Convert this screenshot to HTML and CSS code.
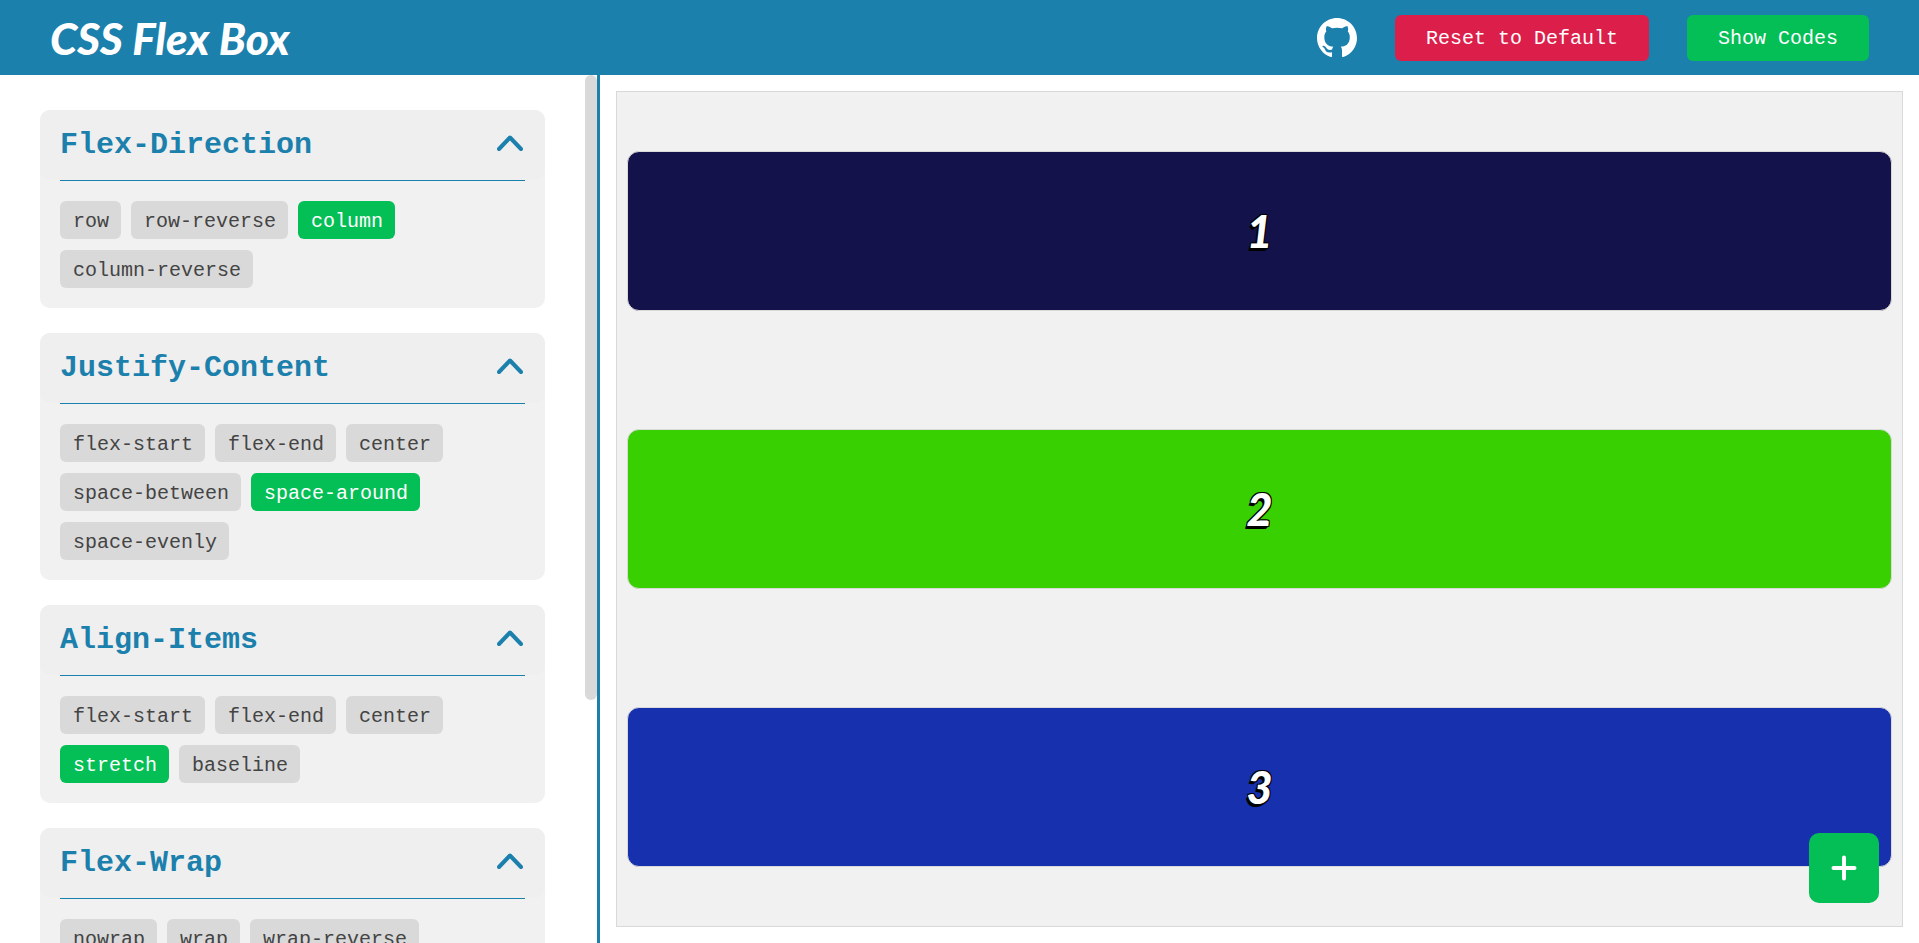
FILE: index.html
```html
<!DOCTYPE html>
<html lang="en">
<head>
<meta charset="utf-8">
<title>CSS Flex Box</title>
<link rel="stylesheet" href="styles.css">
</head>
<body>
<header class="topbar">
  <h1 class="brand">CSS Flex Box</h1>
  <nav class="actions">
    <a class="github" href="#" aria-label="GitHub">
      <svg viewBox="0 0 16 16" fill="currentColor" aria-hidden="true"><path d="M8 0C3.58 0 0 3.58 0 8c0 3.54 2.29 6.53 5.47 7.59.4.07.55-.17.55-.38 0-.19-.01-.82-.01-1.49-2.01.37-2.53-.49-2.69-.94-.09-.23-.48-.94-.82-1.13-.28-.15-.68-.52-.01-.53.63-.01 1.08.58 1.23.82.72 1.21 1.87.87 2.33.66.07-.52.28-.87.51-1.07-1.78-.2-3.64-.89-3.64-3.95 0-.87.31-1.59.82-2.15-.08-.2-.36-1.02.08-2.12 0 0 .67-.21 2.2.82.64-.18 1.32-.27 2-.27s1.36.09 2 .27c1.53-1.04 2.2-.82 2.2-.82.44 1.1.16 1.92.08 2.12.51.56.82 1.27.82 2.15 0 3.07-1.87 3.75-3.65 3.95.29.25.54.73.54 1.48 0 1.07-.01 1.93-.01 2.2 0 .21.15.46.55.38A8.01 8.01 0 0 0 16 8c0-4.42-3.58-8-8-8z"/></svg>
    </a>
    <button class="btn btn-reset" type="button">Reset to Default</button>
    <button class="btn btn-codes" type="button">Show Codes</button>
  </nav>
</header>
<div class="workspace">
  <aside class="sidebar">
    <div class="panel">
      <section class="card">
        <button class="card-head" type="button" aria-expanded="true"><span>Flex-Direction</span><svg class="chevron" viewBox="0 0 26 20" aria-hidden="true"><path d="M2 14 13 2.500 24 14"/></svg></button>
        <div class="options">
          <button class="chip" type="button">row</button>
          <button class="chip" type="button">row-reverse</button>
          <button class="chip active" type="button">column</button>
          <button class="chip" type="button">column-reverse</button>
        </div>
      </section>
      <section class="card">
        <button class="card-head" type="button" aria-expanded="true"><span>Justify-Content</span><svg class="chevron" viewBox="0 0 26 20" aria-hidden="true"><path d="M2 14 13 2.500 24 14"/></svg></button>
        <div class="options">
          <button class="chip" type="button">flex-start</button>
          <button class="chip" type="button">flex-end</button>
          <button class="chip" type="button">center</button>
          <button class="chip" type="button">space-between</button>
          <button class="chip active" type="button">space-around</button>
          <button class="chip" type="button">space-evenly</button>
        </div>
      </section>
      <section class="card">
        <button class="card-head" type="button" aria-expanded="true"><span>Align-Items</span><svg class="chevron" viewBox="0 0 26 20" aria-hidden="true"><path d="M2 14 13 2.500 24 14"/></svg></button>
        <div class="options">
          <button class="chip" type="button">flex-start</button>
          <button class="chip" type="button">flex-end</button>
          <button class="chip" type="button">center</button>
          <button class="chip active" type="button">stretch</button>
          <button class="chip" type="button">baseline</button>
        </div>
      </section>
      <section class="card">
        <button class="card-head" type="button" aria-expanded="true"><span>Flex-Wrap</span><svg class="chevron" viewBox="0 0 26 20" aria-hidden="true"><path d="M2 14 13 2.500 24 14"/></svg></button>
        <div class="options">
          <button class="chip" type="button">nowrap</button>
          <button class="chip" type="button">wrap</button>
          <button class="chip" type="button">wrap-reverse</button>
        </div>
      </section>
    </div>
    <div class="track" aria-hidden="true"><div class="thumb"></div></div>
  </aside>
  <main class="stage">
    <div class="canvas">
      <div class="box box-navy">1</div>
      <div class="box box-green">2</div>
      <div class="box box-blue">3</div>
    </div>
  </main>
</div>
<button class="fab" type="button" aria-label="Add box">
  <svg viewBox="0 0 26 26" aria-hidden="true"><path d="M13 2.500V23.500M2.500 13H23.500"/></svg>
</button>
</body>
</html>
```

FILE: styles.css
```css
:root {
  --blue: #1c80ad;
  --green: #04be56;
  --red: #dc1e4a;
  --grey: #d9d9d9;
  --mono: "Liberation Mono", monospace;
}

* {
  box-sizing: border-box;
}

body {
  margin: 0;
  height: 100vh;
  display: flex;
  flex-direction: column;
  background: #fff;
  font-family: var(--mono);
  overflow: hidden;
}

button {
  border: 0;
  font-family: inherit;
  cursor: pointer;
}

.topbar {
  flex: none;
  height: 75px;
  padding: 0 50px;
  display: flex;
  align-items: center;
  justify-content: space-between;
  background: var(--blue);
  color: #fff;
}

.brand {
  margin: 0;
  font: italic 900 44px/48px Lato, sans-serif;
}

.actions {
  display: flex;
  align-items: center;
  gap: 38px;
}

.github {
  color: #fff;
  display: flex;
}

.github svg {
  width: 40px;
  height: 40px;
}

.btn {
  height: 46px;
  padding: 2px 31px 0;
  border-radius: 6px;
  color: #fff;
  font-size: 20px;
}

.btn-reset {
  background: var(--red);
}

.btn-codes {
  background: var(--green);
}

.workspace {
  flex: 1;
  min-height: 0;
  display: flex;
}

.sidebar {
  flex: none;
  width: 600px;
  border-right: 3px solid var(--blue);
  display: flex;
}

.panel {
  flex: 1;
  padding: 35px 40px;
  overflow-y: auto;
  scrollbar-width: none;
}

.track {
  flex: none;
  width: 12px;
}

.thumb {
  height: 72%;
  border-radius: 6px;
  background: var(--grey);
}

.card {
  border-radius: 10px;
  background: #f1f1f1;
}

.card + .card {
  margin-top: 25px;
}

.card-head {
  width: 100%;
  height: 70px;
  padding: 0 22px 0 20px;
  display: flex;
  align-items: center;
  justify-content: space-between;
  border-radius: 10px;
  background: #efefef;
  color: var(--blue);
  font: bold 30px/36px var(--mono);
}

.chevron {
  width: 26px;
  height: 20px;
  fill: none;
  stroke: currentColor;
  stroke-width: 4;
  stroke-linecap: round;
  stroke-linejoin: round;
}

.options {
  margin: 0 20px;
  padding: 20px 0;
  border-top: 1px solid var(--blue);
  display: flex;
  flex-wrap: wrap;
  gap: 11px 10px;
}

.chip {
  height: 38px;
  padding: 2px 12px 0 13px;
  border-radius: 6px;
  background: var(--grey);
  color: #444;
  font-size: 20px;
}

.chip.active {
  background: var(--green);
  color: #fff;
}

.stage {
  flex: 1;
  min-width: 0;
  padding: 16px;
  display: flex;
}

.canvas {
  flex: 1;
  padding: 0 10px;
  border: 1px solid var(--grey);
  background: #f1f1f1;
  display: flex;
  flex-direction: column;
  justify-content: space-around;
  align-items: stretch;
}

.box {
  padding: 54px 0;
  border: 1px solid var(--grey);
  border-radius: 12px;
  color: #fff;
  font: italic 900 45px/50px Lato, sans-serif;
  text-align: center;
  text-shadow: -1px 2px 0 #000, 1px 1px 0 #000, -1px -1px 0 #000, 1px -1px 0 #000, -2px 3px 0 #000;
}

.box-navy {
  background: #14124a;
}

.box-green {
  background: #38d000;
}

.box-blue {
  background: #1630ae;
}

.fab {
  position: fixed;
  right: 40px;
  bottom: 40px;
  width: 70px;
  height: 70px;
  padding: 0;
  display: grid;
  place-items: center;
  border-radius: 10px;
  background: var(--green);
  color: #fff;
}

.fab svg {
  width: 26px;
  height: 26px;
  fill: none;
  stroke: currentColor;
  stroke-width: 4;
  stroke-linecap: round;
}
```
